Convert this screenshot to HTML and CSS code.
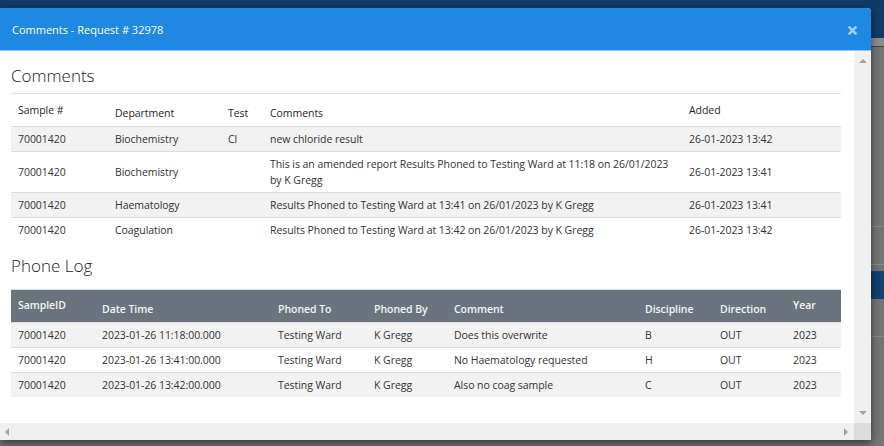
FILE: index.html
```html
<!DOCTYPE html>
<html>
<head>
<meta charset="utf-8">
<link rel="stylesheet" href="styles.css">
</head>
<body>
<div class="backdrop">
  <div class="navbar"></div>
  <div class="subbar"></div>
  <div class="page">
    <div class="prow prow-1"></div>
    <div class="prow prow-2"></div>
    <div class="pbtn"></div>
    <div class="prow prow-3"></div>
  </div>
</div>

<div class="modal">
  <div class="modal-header">
    <span class="modal-title">Comments - Request # 32978</span>
    <span class="close-btn">
      <svg width="9" height="9" viewBox="0 0 9 9"><path d="M1.5 1.5 L7.5 7.5 M7.5 1.5 L1.5 7.5" stroke="#9fcdf6" stroke-width="2.6" stroke-linecap="square"/></svg>
    </span>
  </div>
  <div class="modal-frame">
    <div class="modal-body">
      <h3 class="section-title ruled">Comments</h3>
      <table class="grid comments">
        <colgroup>
          <col style="width:97px"><col style="width:113px"><col style="width:42px"><col style="width:419px"><col>
        </colgroup>
        <thead>
          <tr>
            <th class="raised">Sample #</th>
            <th>Department</th>
            <th>Test</th>
            <th>Comments</th>
            <th class="raised">Added</th>
          </tr>
        </thead>
        <tbody>
          <tr><td>70001420</td><td>Biochemistry</td><td>Cl</td><td>new chloride result</td><td>26-01-2023 13:42</td></tr>
          <tr><td>70001420</td><td>Biochemistry</td><td></td><td>This is an amended report Results Phoned to Testing Ward at 11:18 on 26/01/2023 by K Gregg</td><td>26-01-2023 13:41</td></tr>
          <tr><td>70001420</td><td>Haematology</td><td></td><td>Results Phoned to Testing Ward at 13:41 on 26/01/2023 by K Gregg</td><td>26-01-2023 13:41</td></tr>
          <tr><td>70001420</td><td>Coagulation</td><td></td><td>Results Phoned to Testing Ward at 13:42 on 26/01/2023 by K Gregg</td><td>26-01-2023 13:42</td></tr>
        </tbody>
      </table>

      <h3 class="section-title">Phone Log</h3>
      <table class="grid phone">
        <colgroup>
          <col style="width:84px"><col style="width:176px"><col style="width:96px"><col style="width:80px"><col style="width:191px"><col style="width:75px"><col style="width:73px"><col>
        </colgroup>
        <thead>
          <tr>
            <th class="raised">SampleID</th>
            <th>Date Time</th>
            <th>Phoned To</th>
            <th>Phoned By</th>
            <th>Comment</th>
            <th>Discipline</th>
            <th>Direction</th>
            <th class="raised">Year</th>
          </tr>
        </thead>
        <tbody>
          <tr><td>70001420</td><td>2023-01-26 11:18:00.000</td><td>Testing Ward</td><td>K Gregg</td><td>Does this overwrite</td><td>B</td><td>OUT</td><td>2023</td></tr>
          <tr><td>70001420</td><td>2023-01-26 13:41:00.000</td><td>Testing Ward</td><td>K Gregg</td><td>No Haematology requested</td><td>H</td><td>OUT</td><td>2023</td></tr>
          <tr><td>70001420</td><td>2023-01-26 13:42:00.000</td><td>Testing Ward</td><td>K Gregg</td><td>Also no coag sample</td><td>C</td><td>OUT</td><td>2023</td></tr>
        </tbody>
      </table>
    </div>
    <div class="vscroll">
      <span class="arrow arrow-up"></span>
      <span class="arrow arrow-down"></span>
    </div>
    <div class="hscroll">
      <span class="arrow arrow-left"></span>
      <span class="arrow arrow-right"></span>
    </div>
    <div class="corner"></div>
  </div>
</div>
</body>
</html>
```

FILE: styles.css
```css
html, body {
  margin: 0;
  padding: 0;
}

body {
  width: 884px;
  height: 446px;
  overflow: hidden;
  position: relative;
  background: #4a4a4a;
  font-family: "Open Sans", "Noto Sans", sans-serif;
  color: #333;
}

/* ---------- dimmed page behind the modal ---------- */
.backdrop {
  height: 446px;
  display: flex;
  flex-direction: column;
  background: #717171;
}

.navbar {
  height: 38px;
  background: #0f3b66;
}

.subbar {
  height: 8px;
  background: #8d8d8d;
  border-bottom: 1px solid #3e4650;
}

.page {
  flex: 1;
  display: flex;
  flex-direction: column;
  background: #747474;
}

.prow {
  border-bottom: 1px solid #8a8a8a;
}

.prow-1 { height: 179px; }
.prow-2 { height: 37px; }
.prow-3 { height: 37px; }

.pbtn {
  height: 28px;
  margin-top: 6px;
  background: #0f4270;
}

/* ---------- modal ---------- */
.modal {
  position: absolute;
  left: 0;
  top: 8px;
  width: 871px;
  height: 432px;
  background: #fff;
  border-top-right-radius: 4px;
  box-shadow: 0 3px 8px rgba(0, 0, 0, 0.55);
  display: flex;
  flex-direction: column;
  overflow: hidden;
}

.modal-header {
  height: 42px;
  flex: none;
  background: #1e88e2;
  border-bottom: 1px solid #8cc6f2;
  display: flex;
  align-items: center;
  justify-content: space-between;
  padding: 0 14px 0 12px;
}

.modal-title {
  color: #fff;
  font-size: 11px;
  letter-spacing: 0;
}

.close-btn {
  display: flex;
  margin-top: 2px;
}

.modal-frame {
  flex: 1;
  display: grid;
  grid-template-columns: 1fr 17px;
  grid-template-rows: 1fr 17px;
  min-height: 0;
}

.modal-body {
  overflow: hidden;
  padding: 0 13px 0 11px;
}

.section-title {
  margin: 0;
  padding-top: 15px;
  padding-bottom: 7px;
  font-size: 17px;
  line-height: 20px;
  font-weight: 300;
  color: #222;
}

.section-title.ruled {
  border-bottom: 1px solid #dedede;
}

.comments + .section-title {
  padding-top: 14px;
  padding-bottom: 13px;
}

/* ---------- tables ---------- */
.grid {
  width: 100%;
  border-collapse: collapse;
  table-layout: fixed;
  font-size: 10.5px;
  line-height: 16px;
  letter-spacing: -0.05px;
}

.grid th {
  text-align: left;
  vertical-align: bottom;
  font-weight: 400;
  padding: 11px 7px 5px;
  color: #1f1f1f;
}

.grid th.raised {
  padding-top: 8px;
  padding-bottom: 8px;
}

.grid td {
  padding: 4px 7px 4px;
  vertical-align: middle;
  border-top: 1px solid #dcdcdc;
}

.grid tbody tr:nth-child(odd) td {
  background: #f2f2f2;
}

.phone thead th {
  background: #6b747e;
  color: #f4f4f4;
  font-weight: 600;
  border-top: 1px solid #d8dde2;
}

.phone th.raised {
  padding-top: 7px;
  padding-bottom: 9px;
}

/* ---------- fake scrollbars ---------- */
.vscroll {
  background: #f0f0f0;
  display: flex;
  flex-direction: column;
  justify-content: space-between;
  align-items: center;
  padding: 8px 0 8px;
}

.hscroll {
  background: #f0f0f0;
  display: flex;
  justify-content: space-between;
  align-items: center;
  padding: 0 6px 0 5px;
}

.corner {
  background: #dcdcdc;
}

.arrow {
  width: 0;
  height: 0;
  display: block;
}

.arrow-up {
  border-left: 4px solid transparent;
  border-right: 4px solid transparent;
  border-bottom: 4px solid #a3a3a3;
}

.arrow-down {
  border-left: 4px solid transparent;
  border-right: 4px solid transparent;
  border-top: 4px solid #a3a3a3;
}

.arrow-left {
  border-top: 4px solid transparent;
  border-bottom: 4px solid transparent;
  border-right: 4px solid #a3a3a3;
}

.arrow-right {
  border-top: 4px solid transparent;
  border-bottom: 4px solid transparent;
  border-left: 4px solid #a3a3a3;
}
```
